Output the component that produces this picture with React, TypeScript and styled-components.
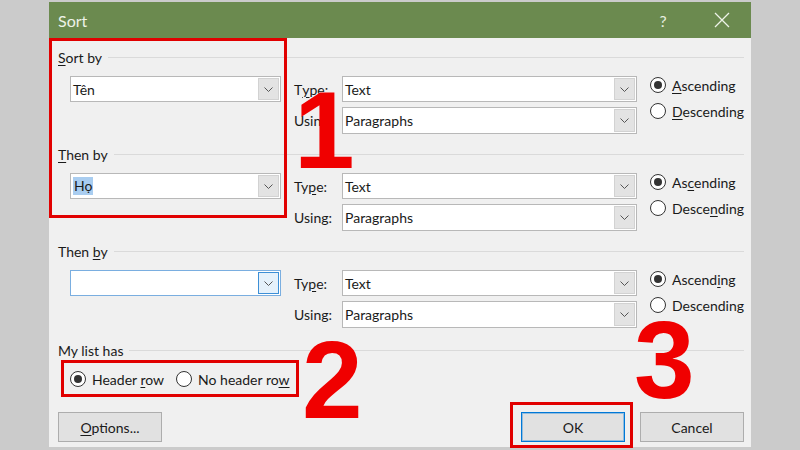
import React from "react";
import styled, { createGlobalStyle } from "styled-components";

const GlobalStyle = createGlobalStyle`
  html, body { margin: 0; padding: 0; }
  body {
    background: #cbcbcb;
    font-family: Lato, "Noto Sans", sans-serif;
    color: #1a1a1a;
  }
`;

const Page = styled.div`
  position: relative;
  width: 800px;
  height: 450px;
  padding: 2px 0 0 49px;
  box-sizing: border-box;
  overflow: hidden;
`;

const Dialog = styled.div`
  width: 702px;
  height: 445px;
  background: #f0f0f0;
  display: flex;
  flex-direction: column;
`;

const TitleBar = styled.div`
  height: 36px;
  background: #6b8a4f;
  display: flex;
  align-items: center;
  padding-left: 9px;
  color: #eef3e8;
`;

const Title = styled.div`
  font-size: 16px;
  flex: 1;
`;

const TitleButton = styled.div<{ $mr: number }>`
  width: 46px;
  height: 36px;
  display: flex;
  align-items: center;
  justify-content: center;
  margin-right: ${(p) => p.$mr}px;
  font-size: 16px;
  color: #e8efe0;
`;

const Body = styled.div`
  flex: 1;
  display: flex;
  flex-direction: column;
  padding: 11px 7px 5px 9px;
`;

const Section = styled.div<{ $mt: number }>`
  margin-top: ${(p) => p.$mt}px;
  display: flex;
  flex-direction: column;
`;

const SectionHeader = styled.div`
  height: 16px;
  display: flex;
  align-items: center;
  gap: 6px;
  font-size: 14px;
`;

const Rule = styled.div`
  flex: 1;
  height: 1px;
  background: #dadada;
  margin-top: 1px;
`;

const SortGrid = styled.div`
  margin-top: 11px;
  padding-left: 12px;
  display: grid;
  grid-template-columns: 211px 13px 48px 295px 13px 1fr;
  grid-template-rows: 26px 27px;
  row-gap: 5px;
`;

const Cell = styled.div<{ $col: number; $row: number; $span?: number }>`
  grid-column: ${(p) => p.$col};
  grid-row: ${(p) => p.$row} / span ${(p) => p.$span ?? 1};
  display: flex;
  align-items: center;
  font-size: 14px;
  min-width: 0;
`;

const Combo = styled.div<{ $hot?: boolean }>`
  width: 100%;
  height: 100%;
  box-sizing: border-box;
  display: flex;
  align-items: stretch;
  background: #fff;
  border: 1px solid ${(p) => (p.$hot ? "#7aaee0" : "#b8b8b8")};
`;

const ComboValue = styled.div`
  flex: 1;
  display: flex;
  align-items: center;
  padding-left: 2px;
  font-size: 14px;
  color: #1a1a1a;
`;

const Selected = styled.span`
  background: #a9cdf0;
  padding: 0 1px;
  line-height: 18px;
`;

const DropButton = styled.div<{ $hot?: boolean }>`
  width: 21px;
  margin: 1px;
  box-sizing: border-box;
  display: flex;
  align-items: center;
  justify-content: center;
  background: ${(p) => (p.$hot ? "#e5f1fb" : "#e3e3e3")};
  border: 1px solid ${(p) => (p.$hot ? "#3d8fd6" : "#d2d2d2")};
`;

const RadioStack = styled.div`
  display: flex;
  flex-direction: column;
  gap: 10px;
  padding-top: 1px;
  align-self: start;
`;

const RadioItem = styled.div`
  display: flex;
  align-items: center;
  height: 16px;
  gap: 6px;
  font-size: 14px;
  white-space: nowrap;
`;

const RadioCircle = styled.div<{ $on?: boolean }>`
  width: 16px;
  height: 16px;
  box-sizing: border-box;
  border-radius: 50%;
  border: 1px solid #333;
  background: #fff;
  display: flex;
  align-items: center;
  justify-content: center;
  flex-shrink: 0;
  &::after {
    content: "";
    width: 8px;
    height: 8px;
    border-radius: 50%;
    background: #333;
    display: ${(p) => (p.$on ? "block" : "none")};
  }
`;

const Key = styled.span`
  text-decoration: underline;
  text-underline-offset: 2px;
  text-decoration-thickness: 1px;
`;

const HeaderOptions = styled.div`
  margin-top: 13px;
  padding-left: 12px;
  display: flex;
  gap: 12px;
`;

const ButtonRow = styled.div`
  margin-top: auto;
  display: flex;
  align-items: center;
  gap: 15px;
`;

const Spacer = styled.div`
  flex: 1;
`;

const Button = styled.div<{ $default?: boolean }>`
  width: 104px;
  height: 30px;
  box-sizing: border-box;
  display: flex;
  align-items: center;
  justify-content: center;
  font-size: 14px;
  background: #e1e1e1;
  border: 1px solid ${(p) => (p.$default ? "#0078d7" : "#adadad")};
  box-shadow: ${(p) => (p.$default ? "inset 0 0 0 1px rgba(0,120,215,0.35)" : "none")};
`;

const RedBox = styled.div`
  position: absolute;
  box-sizing: border-box;
  border: 3px solid #e10000;
  pointer-events: none;
`;

const BigDigit = styled.div`
  position: absolute;
  font-family: "Liberation Sans", Arial, sans-serif;
  font-weight: 700;
  font-size: 109px;
  line-height: 1;
  color: #f00000;
  pointer-events: none;
`;

const Chevron = () => (
  <svg width="9" height="5" viewBox="0 0 9 5">
    <polyline points="0.5,0.5 4.5,4.5 8.5,0.5" fill="none" stroke="#555" strokeWidth="1" />
  </svg>
);

const CloseIcon = () => (
  <svg width="16" height="16" viewBox="0 0 16 16">
    <path d="M1 1 L15 15 M15 1 L1 15" stroke="#eef3e8" strokeWidth="1.3" fill="none" />
  </svg>
);

type ComboProps = { value?: React.ReactNode; hot?: boolean };
const ComboBox = ({ value, hot }: ComboProps) => (
  <Combo $hot={hot}>
    <ComboValue>{value}</ComboValue>
    <DropButton $hot={hot}>
      <Chevron />
    </DropButton>
  </Combo>
);

type SortSectionProps = {
  mt: number;
  label: React.ReactNode;
  field: React.ReactNode;
  fieldHot?: boolean;
  typeLabel: React.ReactNode;
  asc: React.ReactNode;
  desc: React.ReactNode;
};

const SortSection = ({ mt, label, field, fieldHot, typeLabel, asc, desc }: SortSectionProps) => (
  <Section $mt={mt}>
    <SectionHeader>
      <span>{label}</span>
      <Rule />
    </SectionHeader>
    <SortGrid>
      <Cell $col={1} $row={1}>
        <ComboBox value={field} hot={fieldHot} />
      </Cell>
      <Cell $col={3} $row={1}>{typeLabel}</Cell>
      <Cell $col={4} $row={1}>
        <ComboBox value="Text" />
      </Cell>
      <Cell $col={3} $row={2}>Using:</Cell>
      <Cell $col={4} $row={2}>
        <ComboBox value="Paragraphs" />
      </Cell>
      <Cell $col={6} $row={1} $span={2}>
        <RadioStack>
          <RadioItem>
            <RadioCircle $on />
            <span>{asc}</span>
          </RadioItem>
          <RadioItem>
            <RadioCircle />
            <span>{desc}</span>
          </RadioItem>
        </RadioStack>
      </Cell>
    </SortGrid>
  </Section>
);

export default function App() {
  return (
    <>
      <GlobalStyle />
      <Page>
        <Dialog>
          <TitleBar>
            <Title>Sort</Title>
            <TitleButton $mr={13}>?</TitleButton>
            <TitleButton $mr={6}>
              <CloseIcon />
            </TitleButton>
          </TitleBar>
          <Body>
            <SortSection
              mt={0}
              label={<><Key>S</Key>ort by</>}
              field="Tên"
              typeLabel={<>T<Key>y</Key>pe:</>}
              asc={<><Key>A</Key>scending</>}
              desc={<><Key>D</Key>escending</>}
            />
            <SortSection
              mt={12}
              label={<><Key>T</Key>hen by</>}
              field={<Selected>Họ</Selected>}
              typeLabel={<>Ty<Key>p</Key>e:</>}
              asc={<>As<Key>c</Key>ending</>}
              desc={<>Desce<Key>n</Key>ding</>}
            />
            <SortSection
              mt={12}
              label={<>Then <Key>b</Key>y</>}
              field=""
              fieldHot
              typeLabel={<>Ty<Key>p</Key>e:</>}
              asc={<>Ascend<Key>i</Key>ng</>}
              desc={<>Descending</>}
            />
            <Section $mt={14}>
              <SectionHeader>
                <span>My list has</span>
                <Rule />
              </SectionHeader>
              <HeaderOptions>
                <RadioItem>
                  <RadioCircle $on />
                  <span>Header <Key>r</Key>ow</span>
                </RadioItem>
                <RadioItem>
                  <RadioCircle />
                  <span>No header ro<Key>w</Key></span>
                </RadioItem>
              </HeaderOptions>
            </Section>
            <ButtonRow>
              <Button><span><Key>O</Key>ptions...</span></Button>
              <Spacer />
              <Button $default>OK</Button>
              <Button>Cancel</Button>
            </ButtonRow>
          </Body>
        </Dialog>

        <RedBox style={{ left: 49, top: 38, width: 238, height: 180 }} />
        <RedBox style={{ left: 61, top: 360, width: 238, height: 37 }} />
        <RedBox style={{ left: 510, top: 402, width: 123, height: 46 }} />
        <BigDigit style={{ left: 294, top: 76 }}>1</BigDigit>
        <BigDigit style={{ left: 302, top: 326 }}>2</BigDigit>
        <BigDigit style={{ left: 634, top: 306 }}>3</BigDigit>
      </Page>
    </>
  );
}
